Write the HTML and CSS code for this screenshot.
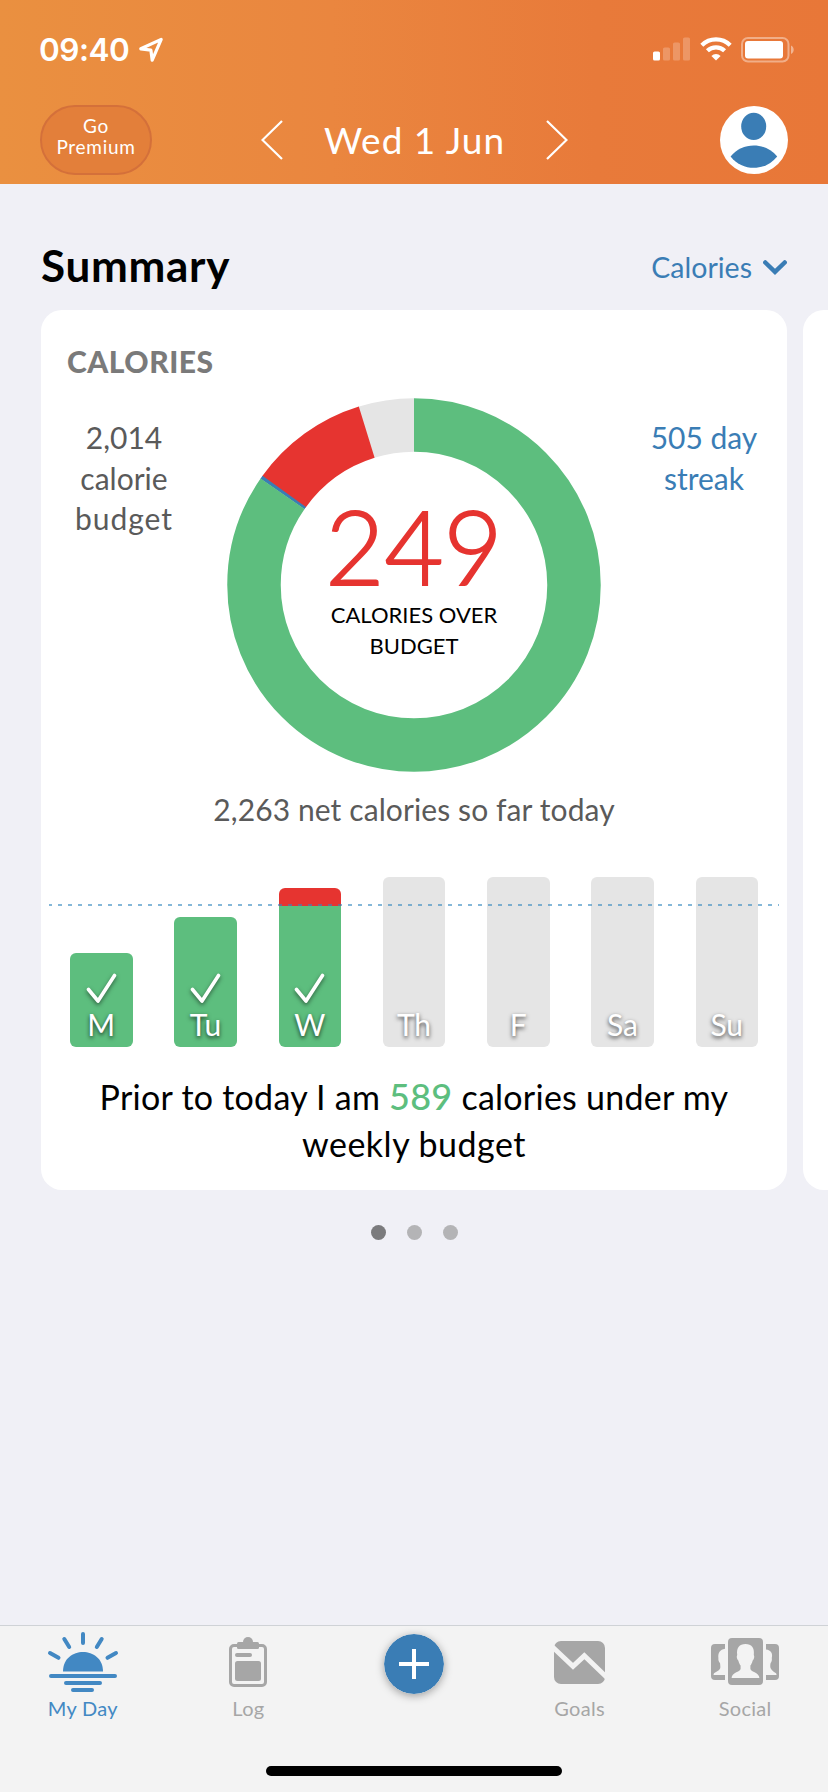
FILE: index.html
```html
<!DOCTYPE html>
<html lang="en">
<head>
  <meta charset="UTF-8">
  <title>My Day</title>
  <meta name="viewport" content="width=device-width, initial-scale=1">
  <link rel="stylesheet" href="styles.css">
</head>
<body>
  <header class="header">
    <div class="status-bar">
      <div class="status-left">
        <span class="time">09:40</span>
        <svg class="location" width="26" height="26" viewBox="0 0 26 26"><path d="M23.2 2.4L2.8 11.8L12.9 13.2L14.2 23.2Z" fill="none" stroke="#fff" stroke-width="3.2" stroke-linejoin="round"/></svg>
      </div>
      <div class="status-right">
        <svg width="38" height="24" viewBox="0 0 38 24" fill="#fff">
          <rect x="0" y="14.5" width="7" height="9" rx="1.6"/>
          <g opacity=".22">
            <rect x="10" y="10.5" width="7" height="13" rx="1.6"/>
            <rect x="20" y="5.5" width="7" height="18" rx="1.6"/>
            <rect x="30" y=".5" width="7" height="23" rx="1.6"/>
          </g>
        </svg>
        <svg class="wifi" width="32" height="24" viewBox="0 0 32 24">
          <path d="M1.8 8.2A20.2 20.2 0 0 1 30.2 8.2" fill="none" stroke="#fff" stroke-width="4.2"/>
          <path d="M7.4 13.8A12.3 12.3 0 0 1 24.6 13.8" fill="none" stroke="#fff" stroke-width="4.2"/>
          <path d="M11.4 18.9A6.8 6.8 0 0 1 20.6 18.9L16 23.6Z" fill="#fff"/>
        </svg>
        <svg class="battery" width="54" height="26" viewBox="0 0 54 26">
          <rect x="1" y="1" width="46.500" height="23.500" rx="6" fill="none" stroke="#fff" stroke-opacity=".4" stroke-width="2"/>
          <rect x="4" y="4" width="38" height="17.500" rx="3" fill="#fff"/>
          <path d="M50 8.500C53.600 9.800 53.600 15.800 50 17Z" fill="#fff" fill-opacity=".45"/>
        </svg>
      </div>
    </div>
    <div class="nav">
      <a class="premium">Go<br>Premium</a>
      <div class="date-picker">
        <svg width="22" height="40" viewBox="0 0 22 40"><path d="M21 1L1.500 20L21 39" fill="none" stroke="#fff" stroke-width="2.200"/></svg>
        <span class="date">Wed 1 Jun</span>
        <svg width="22" height="40" viewBox="0 0 22 40"><path d="M1 1L20.500 20L1 39" fill="none" stroke="#fff" stroke-width="2.200"/></svg>
      </div>
      <svg class="avatar" width="68" height="68" viewBox="0 0 68 68">
        <circle cx="34" cy="34" r="34" fill="#fff"/>
        <ellipse cx="33.700" cy="20.400" rx="12.500" ry="13.600" fill="#3a7db5"/>
        <path d="M10.600 50.400C22 35.800 45.500 35.800 57.200 50.400C45 65.600 22.500 65.600 10.600 50.400Z" fill="#3a7db5"/>
      </svg>
    </div>
  </header>

  <main class="main">
    <div class="section-head">
      <h1 class="title">Summary</h1>
      <div class="filter">
        <span>Calories</span>
        <svg width="24" height="15" viewBox="0 0 24 15"><path d="M2.300 2.500L12 11.800L21.700 2.500" fill="none" stroke="#3a7db5" stroke-width="4.500" stroke-linecap="round"/></svg>
      </div>
    </div>

    <div class="cards">
      <section class="card">
        <h2 class="card-title">CALORIES</h2>
        <div class="overview">
          <div class="side budget">2,014<br>calorie<br><span class="wide">budget</span></div>
          <div class="donut">
            <svg width="374" height="374" viewBox="0 0 374 374">
              <g fill="none" stroke-width="53.500" transform="rotate(-90 187 187)">
                <circle cx="187" cy="187" r="160" stroke="#e5e5e5" pathLength="360" stroke-dasharray="17.400 360" stroke-dashoffset="-342.600"/>
                <circle cx="187" cy="187" r="160" stroke="#e63430" pathLength="360" stroke-dasharray="37.300 360" stroke-dashoffset="-305.500"/>
                <circle cx="187" cy="187" r="160" stroke="#3a7db5" pathLength="360" stroke-dasharray="1.100 360" stroke-dashoffset="-304.700"/>
                <circle cx="187" cy="187" r="160" stroke="#5dbe7e" pathLength="360" stroke-dasharray="304.800 360"/>
              </g>
            </svg>
            <div class="donut-label">
              <div class="amount">249</div>
              <div class="amount-note">CALORIES OVER<br>BUDGET</div>
            </div>
          </div>
          <div class="side streak">505 day<br>streak</div>
        </div>
        <p class="net">2,263 net calories so far today</p>

        <div class="week">
          <div class="bar done bar-m"><svg class="check" width="31" height="31" viewBox="0 0 31 31"><path d="M2.500 16.500L12 28L28.500 2.500" fill="none" stroke="#fff" stroke-width="3.600" stroke-linecap="round" stroke-linejoin="round"/></svg><span>M</span></div>
          <div class="bar done bar-tu"><svg class="check" width="31" height="31" viewBox="0 0 31 31"><path d="M2.500 16.500L12 28L28.500 2.500" fill="none" stroke="#fff" stroke-width="3.600" stroke-linecap="round" stroke-linejoin="round"/></svg><span>Tu</span></div>
          <div class="bar done over bar-w"><svg class="check" width="31" height="31" viewBox="0 0 31 31"><path d="M2.500 16.500L12 28L28.500 2.500" fill="none" stroke="#fff" stroke-width="3.600" stroke-linecap="round" stroke-linejoin="round"/></svg><span>W</span></div>
          <div class="bar"><span>Th</span></div>
          <div class="bar"><span>F</span></div>
          <div class="bar"><span>Sa</span></div>
          <div class="bar"><span>Su</span></div>
          <div class="limit"></div>
        </div>

        <p class="weekly">Prior to today I am <b>589</b> calories under my<br><span class="weekly-end">weekly budget</span></p>
      </section>
      <section class="card next"></section>
    </div>

    <div class="pager">
      <span class="dot active"></span>
      <span class="dot"></span>
      <span class="dot"></span>
    </div>
  </main>

  <nav class="tabs">
    <a class="tab selected">
      <svg width="72" height="62" viewBox="0 0 72 62">
        <path d="M16 40.500C16 14.500 56 14.500 56 40.500Z" fill="#4288c3"/>
        <path d="M36 3V12M17.300 8L22.200 16M54.700 8L49.800 16M3 22L11.500 26.800M69 22L60.500 26.800M4 45H68M19 52H53M26 59H45" fill="none" stroke="#4288c3" stroke-width="4" stroke-linecap="round"/>
      </svg>
      <span>My Day</span>
    </a>
    <a class="tab">
      <svg width="38" height="62" viewBox="0 -6 38 62" fill="#a6a6a6">
        <rect x="1.500" y="8.500" width="35" height="40" rx="3.500" fill="none" stroke="#a6a6a6" stroke-width="3"/>
        <circle cx="19" cy="5" r="5"/>
        <rect x="8" y="5" width="22" height="7" rx="1.500"/>
        <rect x="6" y="16" width="17" height="4" rx="2"/>
        <rect x="6" y="24" width="26" height="20" rx="2.500"/>
      </svg>
      <span>Log</span>
    </a>
    <a class="tab add">
      <svg width="60" height="60" viewBox="0 0 60 60">
        <circle cx="30" cy="30" r="30" fill="#3a7db5"/>
        <path d="M30 15V45M15 30H45" stroke="#fff" stroke-width="4"/>
      </svg>
    </a>
    <a class="tab">
      <svg width="51" height="62" viewBox="0 -10 51 62">
        <rect width="51" height="43" rx="7" fill="#a6a6a6"/>
        <path d="M-2 5.500L19 25.300L30.300 14.800L53 36.500" fill="none" stroke="#f3f3f3" stroke-width="5"/>
      </svg>
      <span>Goals</span>
    </a>
    <a class="tab">
      <svg width="68" height="62" viewBox="0 -7 68 62">
        <g fill="#a6a6a6">
          <path d="M14 6H4Q0 6 0 10V38Q0 42 4 42H14Z"/>
          <path d="M55 6H64Q68 6 68 10V38Q68 42 64 42H55Z"/>
          <rect x="17" width="35" height="47" rx="4"/>
        </g>
        <g fill="#f3f3f3">
          <path d="M14 10.800C9 11.500 6.800 15 7.400 20C7.100 22.500 8 24 9 25C9.600 30 10 31.500 5 34C3 35 2.600 35.600 2.600 37H14Z"/>
          <path d="M55 11.500C60 12 62 15.500 60.800 20C61.200 22.500 60.500 24 59.600 25C58.500 30 60 31.500 63 34C65 35 65.500 35.600 65.500 37H55Z"/>
          <path d="M34.500 6C40.600 6 43.600 9.500 42.800 17C43.800 18.500 43 21.500 41.600 22.800C41 25 40.600 26 39.400 27.500V31C40 34 48.400 34.500 48.400 40H20.600C20.600 34.500 29 34 29.600 31V27.500C28.400 26 28 25 27.400 22.800C26 21.500 25.200 18.500 26.200 17C25.400 9.500 28.400 6 34.500 6Z"/>
        </g>
      </svg>
      <span>Social</span>
    </a>
  </nav>
  <div class="home-area"><div class="home-indicator"></div></div>
</body>
</html>
```
FILE: styles.css
```css
* {
  box-sizing: border-box;
}
body {
  margin: 0;
  width: 828px;
  height: 1792px;
  display: flex;
  flex-direction: column;
  overflow: hidden;
  background-color: #f0f0f6;
  font-family: Lato, 'Open Sans', sans-serif;
}
svg {
  display: block;
  flex: none;
}
h1, h2, p {
  margin: 0;
}

/* Header */
.header {
  height: 184px;
  flex: none;
  background: linear-gradient(90deg, #ea9040 0%, #ea863f 40%, #e87a3a 72%, #e87738 100%);
  color: #fff;
}
.status-bar {
  height: 100px;
  display: flex;
  justify-content: space-between;
  padding: 36px 33px 0 39px;
}
.status-left, .status-right {
  display: flex;
  height: 28px;
}
.time {
  font-family: Inter, sans-serif;
  font-size: 31.5px;
  line-height: 28px;
  font-weight: 600;
  letter-spacing: -0.5px;
  width: 99px;
}
.location {
  margin-top: 1px;
}
.status-right {
  padding-top: 1px;
}
.wifi {
  margin-left: 9px;
}
.battery {
  margin-left: 9px;
}
.nav {
  display: flex;
  align-items: center;
  justify-content: space-between;
  height: 80px;
  padding: 0 40px;
}
.premium {
  width: 112px;
  height: 70px;
  padding-top: 8px;
  border: 2px solid #d4703a;
  border-radius: 35px;
  background: #e37f3a;
  font-size: 19px;
  line-height: 21px;
  letter-spacing: 0.7px;
  text-align: center;
}
.date-picker {
  display: flex;
  align-items: center;
  justify-content: space-between;
  width: 307px;
  margin-right: 43px;
}
.date {
  font-size: 37px;
  line-height: 40px;
  letter-spacing: 1px;
  white-space: nowrap;
}

/* Summary */
.main {
  flex: 1;
}
.section-head {
  display: flex;
  justify-content: space-between;
  height: 126px;
  padding: 56px 41px 0 41px;
}
.title {
  font-size: 44px;
  line-height: 50px;
  font-weight: 700;
  letter-spacing: 0.7px;
  color: #000;
}
.filter {
  display: flex;
  gap: 11px;
  color: #3a7db5;
  font-size: 28.5px;
  line-height: 54px;
}
.filter svg {
  margin-top: 20px;
}
.cards {
  display: flex;
  gap: 16px;
  padding-left: 41px;
  overflow: hidden;
}
.card {
  flex: none;
  width: 746px;
  height: 880px;
  border-radius: 21px;
  background: #fff;
}
.card-title {
  padding: 33px 0 0 26px;
  font-size: 30px;
  line-height: 36px;
  font-weight: 900;
  letter-spacing: 0.5px;
  color: #7a7a7a;
}
.overview {
  display: flex;
  justify-content: space-between;
  margin-top: 19px;
  padding: 0 16px;
}
.side {
  width: 134px;
  padding-top: 19px;
  font-size: 30px;
  line-height: 40.5px;
  text-align: center;
  white-space: nowrap;
}
.budget {
  color: #5a5a5a;
}
.wide {
  letter-spacing: 1px;
}
.streak {
  color: #3a7db5;
}
.donut {
  display: grid;
}
.donut svg, .donut-label {
  grid-area: 1 / 1;
}
.donut-label {
  padding-top: 98px;
  text-align: center;
}
.amount {
  height: 103px;
  font-size: 102px;
  line-height: 100px;
  font-weight: 300;
  -webkit-text-stroke: 1.8px #e63430;
  color: #e63430;
}
.amount-note {
  font-size: 22px;
  line-height: 31px;
  color: #000;
}
.net {
  margin-top: 19px;
  font-size: 30px;
  line-height: 36px;
  letter-spacing: 0.1px;
  color: #5a5a5a;
  text-align: center;
}

/* Week chart */
.week {
  position: relative;
  display: flex;
  align-items: flex-end;
  justify-content: space-between;
  height: 170px;
  margin-top: 50px;
  padding: 0 29px;
}
.bar {
  display: flex;
  flex-direction: column;
  align-items: center;
  justify-content: flex-end;
  width: 62.5px;
  height: 170px;
  padding-bottom: 6px;
  border-radius: 6px;
  background: #e5e5e5;
  color: #fff;
  font-size: 30px;
  line-height: 34px;
  text-shadow: 0 2px 4px rgba(0, 0, 0, 0.7);
}
.done {
  background: #5dbe7e;
}
.over {
  background: linear-gradient(#e63430 18px, #5dbe7e 18px);
}
.bar-m {
  height: 94px;
}
.bar-tu {
  height: 130px;
}
.bar-w {
  height: 159px;
}
.check {
  margin-bottom: 3px;
  overflow: visible;
  filter: drop-shadow(0 2px 2px rgba(0, 0, 0, 0.5));
}
/* daily budget line, drawn across the bars */
.limit {
  position: absolute;
  left: 8px;
  right: 8px;
  top: 27px;
  height: 2px;
  background: repeating-linear-gradient(90deg, rgba(50, 135, 190, 0.6) 0 4px, transparent 4px 10px);
  background-position: -1px 0;
}
.weekly {
  margin-top: 26px;
  font-size: 34px;
  line-height: 47px;
  letter-spacing: 0.25px;
  color: #000;
  text-align: center;
  white-space: nowrap;
}
.weekly b {
  font-weight: 500;
  font-size: 36px;
  color: #5dbe7e;
}
.weekly-end {
  letter-spacing: 0.5px;
}
.pager {
  display: flex;
  justify-content: center;
  gap: 21px;
  margin-top: 35px;
}
.dot {
  width: 15px;
  height: 15px;
  border-radius: 50%;
  background: #b4b4b6;
}
.active {
  background: #7b7b7d;
}

/* Tab bar */
.tabs {
  display: flex;
  height: 127px;
  flex: none;
  border-top: 1px solid #cfd2d6;
  background: #f3f3f3;
}
.tab {
  flex: 1;
  display: flex;
  flex-direction: column;
  align-items: center;
  padding-top: 5px;
  color: #a6a6a6;
  font-size: 20px;
  line-height: 28px;
  letter-spacing: 0.3px;
}
.tab span {
  margin-top: 1px;
}
.selected {
  color: #4288c3;
}
.add {
  padding-top: 8px;
}
.add svg {
  border-radius: 50%;
  box-shadow: 0 2px 8px rgba(0, 0, 0, 0.35);
}
.home-area {
  height: 40px;
  flex: none;
  padding-top: 14px;
  background: #f3f3f3;
}
.home-indicator {
  width: 296px;
  height: 10px;
  margin: 0 auto;
  border-radius: 5px;
  background: #000;
}
```
